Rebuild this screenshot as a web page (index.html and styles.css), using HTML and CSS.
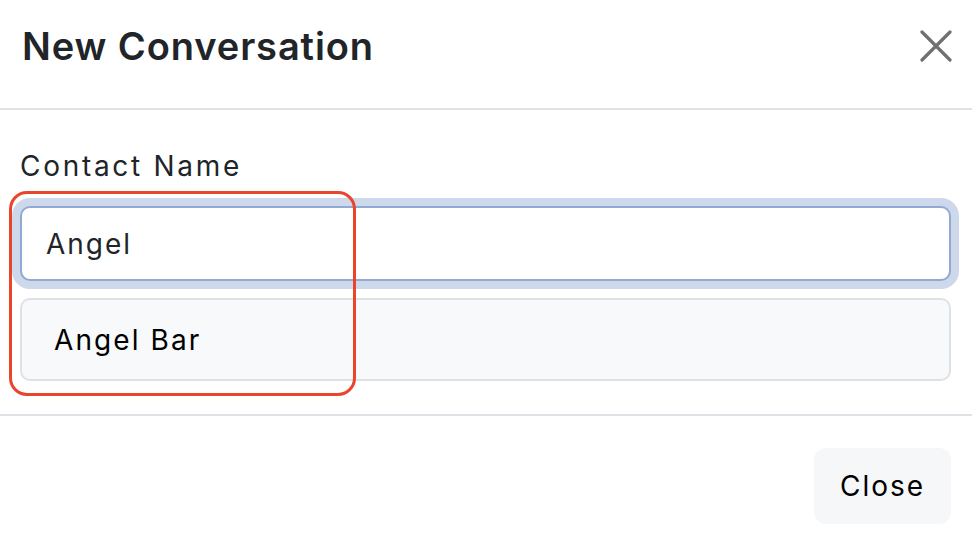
FILE: index.html
```html
<!DOCTYPE html>
<html lang="en">
<head>
<meta charset="utf-8">
<title>New Conversation</title>
<link rel="stylesheet" href="styles.css">
</head>
<body>
<div class="modal">
  <div class="modal-header">
    <h1 class="modal-title">New Conversation</h1>
    <button class="btn-close" aria-label="Close">
      <svg width="32" height="32" viewBox="0 0 32 32"><path d="M2 2 L30 30 M30 2 L2 30" stroke="#707070" stroke-width="3.2" stroke-linecap="round" fill="none"/></svg>
    </button>
  </div>
  <div class="modal-body">
    <label class="form-label" for="contact">Contact Name</label>
    <input class="form-control" id="contact" type="text" value="Angel">
    <ul class="suggestions">
      <li class="suggestion">Angel Bar</li>
    </ul>
    <div class="annotation"></div>
  </div>
  <div class="modal-footer">
    <button class="btn-secondary">Close</button>
  </div>
</div>
</body>
</html>
```
FILE: styles.css
```css
* { box-sizing: border-box; }
html, body {
  margin: 0;
  padding: 0;
  background: #ffffff;
  font-family: Inter, "Open Sans", "Liberation Sans", sans-serif;
  color: #212529;
}
.modal {
  width: 972px;
  height: 542px;
  display: flex;
  flex-direction: column;
  overflow: hidden;
}
.modal-header {
  display: flex;
  align-items: center;
  justify-content: space-between;
  padding: 20px 20px 36px 22px;
  height: 110px;
  border-bottom: 2px solid #dee2e6;
}
.modal-title {
  margin: 0;
  font-size: 38px;
  line-height: 52px;
  font-weight: 600;
  letter-spacing: 0.9px;
  color: #212529;
}
.btn-close {
  border: 0;
  background: transparent;
  padding: 0;
  width: 32px;
  height: 32px;
  display: flex;
}
.modal-body {
  position: relative;
  padding: 36px 21px 0 20px;
  height: 304px;
}
.form-label {
  display: block;
  font-size: 28px;
  line-height: 40px;
  letter-spacing: 2.7px;
  margin-bottom: 20px;
  color: #212529;
}
.form-control {
  display: block;
  width: 100%;
  height: 75px;
  border: 2px solid #91aad3;
  border-radius: 10px;
  box-shadow: 0 0 0 8px #cdd8ea;
  padding: 0 24px;
  font-family: inherit;
  font-size: 28px;
  letter-spacing: 2px;
  color: #212529;
  background: #ffffff;
  outline: none;
}
.suggestions {
  list-style: none;
  margin: 17px 0 0 0;
  padding: 0;
}
.suggestion {
  height: 83px;
  display: flex;
  align-items: center;
  padding: 0 32px;
  border: 2px solid #dee2e6;
  border-radius: 10px;
  background: #f8f9fa;
  font-size: 28px;
  letter-spacing: 2.1px;
  color: #000000;
}
.annotation {
  position: absolute;
  left: 9px;
  top: 81px;
  width: 347px;
  height: 205px;
  border: 3.5px solid #e9452b;
  border-radius: 18px;
  pointer-events: none;
}
.modal-footer {
  border-top: 2px solid #dee2e6;
  display: flex;
  justify-content: flex-end;
  padding: 32px 21px 0 0;
  flex: 1;
}
.btn-secondary {
  width: 137px;
  height: 76px;
  border: 0;
  border-radius: 12px;
  background: #f6f7f9;
  font-family: inherit;
  font-size: 28px;
  letter-spacing: 2px;
  color: #000000;
  padding: 0;
}
```
